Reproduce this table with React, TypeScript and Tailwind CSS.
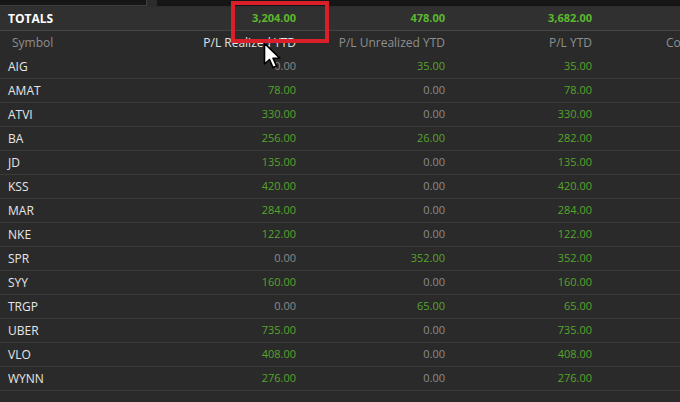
import React from "react";

type Row = { sym: string; real: string; unreal: string; total: string };

const rows: Row[] = [
  { sym: "AIG", real: "0.00", unreal: "35.00", total: "35.00" },
  { sym: "AMAT", real: "78.00", unreal: "0.00", total: "78.00" },
  { sym: "ATVI", real: "330.00", unreal: "0.00", total: "330.00" },
  { sym: "BA", real: "256.00", unreal: "26.00", total: "282.00" },
  { sym: "JD", real: "135.00", unreal: "0.00", total: "135.00" },
  { sym: "KSS", real: "420.00", unreal: "0.00", total: "420.00" },
  { sym: "MAR", real: "284.00", unreal: "0.00", total: "284.00" },
  { sym: "NKE", real: "122.00", unreal: "0.00", total: "122.00" },
  { sym: "SPR", real: "0.00", unreal: "352.00", total: "352.00" },
  { sym: "SYY", real: "160.00", unreal: "0.00", total: "160.00" },
  { sym: "TRGP", real: "0.00", unreal: "65.00", total: "65.00" },
  { sym: "UBER", real: "735.00", unreal: "0.00", total: "735.00" },
  { sym: "VLO", real: "408.00", unreal: "0.00", total: "408.00" },
  { sym: "WYNN", real: "276.00", unreal: "0.00", total: "276.00" },
];

const grid = "grid grid-cols-[150px_146px_149px_147px_1fr] items-center";

const Num = ({ v }: { v: string }) => (
  <div className={`text-right text-[11px] ${v === "0.00" ? "text-[#8a8a8a]" : "text-[#55a52c]"}`}>{v}</div>
);

const Cursor = () => (
  <svg width="20" height="28" viewBox="0 0 20 28" className="absolute left-[263px] top-[42px]">
    <path
      d="M1.5 1.5 L1.5 22 L6.5 17.5 L10 25.5 L13.5 24 L10 16.2 L16.8 16.2 Z"
      fill="#fff"
      stroke="#000"
      strokeWidth="1.6"
      strokeLinejoin="round"
    />
  </svg>
);

export default function App() {
  return (
    <div
      className="relative w-[680px] h-[402px] overflow-hidden bg-[#2a2a2a] text-[#e6e6e6]"
      style={{ fontFamily: '"Open Sans", "Noto Sans", sans-serif' }}
    >
      {/* top strip */}
      <div className="flex h-[7px] bg-[#2c2c2c]">
        <div className="w-[147px] h-[6px] bg-[#161616] border-r border-b border-[#3e3e3e]" />
        <div className="w-[10px]" />
        <div className="flex-1 h-[6px] bg-[#161616]" />
      </div>

      {/* totals */}
      <div className={`${grid} h-[24px] bg-[#303030] border-b border-[#454545]`}>
        <div className="pl-[8px] text-[12px] font-bold text-white">TOTALS</div>
        <div className="text-right text-[11px] font-bold text-[#5cb82e]">3,204.00</div>
        <div className="text-right text-[11px] font-bold text-[#5cb82e]">478.00</div>
        <div className="text-right text-[11px] font-bold text-[#5cb82e]">3,682.00</div>
        <div />
      </div>

      {/* header */}
      <div className={`${grid} h-[24px] text-[12px] text-[#8f8f8f]`}>
        <div className="pl-[12px]">Symbol</div>
        <div className="text-right text-[#e2e2e2] whitespace-nowrap">P/L Realized YTD</div>
        <div className="text-right whitespace-nowrap">P/L Unrealized YTD</div>
        <div className="text-right whitespace-nowrap">P/L YTD</div>
        <div className="pl-[74px] whitespace-nowrap overflow-hidden">Cost</div>
      </div>

      {rows.map((r) => (
        <div key={r.sym} className={`${grid} h-[24px] border-b border-[#3b3b3b]`}>
          <div className="pl-[8px] text-[12px] text-[#e6e6e6]">{r.sym}</div>
          <Num v={r.real} />
          <Num v={r.unreal} />
          <Num v={r.total} />
          <div />
        </div>
      ))}

      {/* highlight box */}
      <div className="absolute left-[231px] top-[1px] w-[98px] h-[42px] border-[4px] border-[#d9202a]" />
      <Cursor />
    </div>
  );
}
